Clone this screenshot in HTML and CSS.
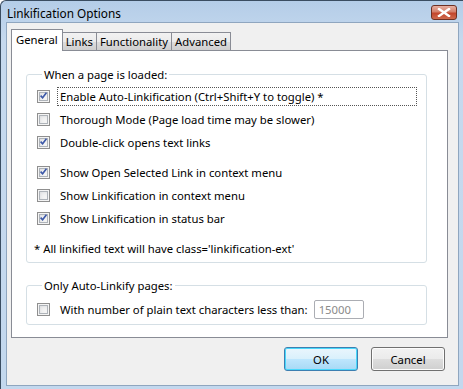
FILE: index.html
```html
<!DOCTYPE html>
<html lang="en">
<head>
    <meta charset="UTF-8">
    <title>Linkification Options</title>
    <link rel="stylesheet" href="styles.css">
</head>
<body>

    <div class="window">
        <!-- Title bar -->
        <div class="titlebar">
            <span class="title">Linkification Options</span>
            <span class="close-btn">
                <svg width="14" height="9" viewBox="0 0 14 9">
                    <path d="M2 1 L12 8 M12 1 L2 8" stroke="#fff" stroke-width="2.4" stroke-linecap="square"/>
                </svg>
            </span>
        </div>

        <div class="client">
            <!-- Tabs -->
            <div class="tabs">
                <div class="tab active">General</div>
                <div class="tab">Links</div>
                <div class="tab">Functionality</div>
                <div class="tab">Advanced</div>
            </div>

            <div class="panel">
                <fieldset class="group group-load">
                    <legend>When a page is loaded:</legend>
                    <div class="row"><span class="check on"></span><span class="label focus">Enable Auto-Linkification (Ctrl+Shift+Y to toggle) *</span></div>
                    <div class="row"><span class="check"></span><span class="label">Thorough Mode (Page load time may be slower)</span></div>
                    <div class="row"><span class="check on"></span><span class="label">Double-click opens text links</span></div>
                    <div class="row spaced"><span class="check on"></span><span class="label">Show Open Selected Link in context menu</span></div>
                    <div class="row"><span class="check"></span><span class="label">Show Linkification in context menu</span></div>
                    <div class="row"><span class="check on"></span><span class="label">Show Linkification in status bar</span></div>
                    <p class="note">* All linkified text will have class='linkification-ext'</p>
                </fieldset>

                <fieldset class="group group-only">
                    <legend>Only Auto-Linkify pages:</legend>
                    <div class="row"><span class="check"></span><span class="label">With number of plain text characters less than:</span><span class="textbox">15000</span></div>
                </fieldset>
            </div>

            <div class="buttons">
                <button class="btn default">OK</button>
                <button class="btn">Cancel</button>
            </div>
        </div>
    </div>

</body>
</html>
```

FILE: styles.css
```css
/* Page */
body {
    margin: 0;
    font-family: "Noto Sans", "DejaVu Sans", sans-serif;
    font-size: 11.3px;
    color: #000;
}

/* Window frame */
.window {
    width: 463px;
    height: 389px;
    box-sizing: border-box;
    border: 1px solid #3a4d61;
    border-bottom: none;
    border-right: none;
    border-radius: 6px 0 0 0;
    background: linear-gradient(#b4cde8, #c6d9ee 40px, #c3d8ee);
    display: flex;
    flex-direction: column;
}

.titlebar {
    height: 21px;
    display: flex;
    align-items: center;
    justify-content: space-between;
    padding: 0 6px 0 6px;
}

.title {
    font-size: 11.8px;
    margin-top: 2px;
}

/* Red close button */
.close-btn {
    width: 24px;
    height: 13px;
    border: 1px solid #6e3023;
    border-radius: 3px;
    background: linear-gradient(#e8b0a2, #d47f6b 45%, #c2452c 55%, #cf6a4e);
    display: flex;
    align-items: center;
    justify-content: center;
    margin-top: 2px;
}

/* Client area */
.client {
    flex: 1;
    margin: 0 4px 3px 5px;
    border: 1px solid #8fa6bf;
    background-color: #f0f0f0;
    padding: 7px 10px 0 4px;
    display: flex;
    flex-direction: column;
}

/* Tabs */
.tabs {
    display: flex;
    align-items: flex-end;
    height: 20px;
    position: relative;
    z-index: 1;
}

.tab {
    height: 18px;
    box-sizing: border-box;
    padding: 0 3px;
    border: 1px solid #898c95;
    border-bottom: none;
    margin-right: -1px;
    background: linear-gradient(#f2f2f2, #ebebeb 50%, #dddddd 51%, #cfcfcf);
    line-height: 17px;
}

.tab.active {
    height: 22px;
    margin-bottom: -1px;
    padding: 0 4px;
    background: #fff;
    line-height: 19px;
}

.panel {
    background: #fff;
    border: 1px solid #898c95;
    height: 288px;
    box-sizing: border-box;
    padding: 16px 20px 0 14px;
}

/* Group boxes */
.group {
    margin: 0;
    border: 1px solid #d5dfe5;
    border-radius: 3px;
    padding: 3px 0 0 10px;
}

.group legend {
    margin-left: 5px;
    padding: 0 2px;
}

.group-load {
    height: 196px;
    box-sizing: border-box;
}

.group-only {
    margin-top: 15px;
    height: 47px;
    box-sizing: border-box;
    padding-top: 5px;
}

.row {
    height: 23px;
    display: flex;
    align-items: center;
}

.row.spaced {
    margin-top: 7px;
}

/* Vista style checkbox */
.check {
    width: 13px;
    height: 13px;
    box-sizing: border-box;
    border: 1px solid #8f8f8f;
    background: #f4f4f4;
    box-shadow: inset 0 0 0 1px #f4f4f4, inset 0 0 0 2px #aeb3b9, inset 2px 2px 4px #d5d7da;
    flex-shrink: 0;
    margin-right: 7px;
    position: relative;
}

.check.on::after {
    content: "";
    position: absolute;
    left: 2px;
    top: 1px;
    width: 7px;
    height: 7px;
    background: no-repeat center/7px 7px url("data:image/svg+xml,%3Csvg xmlns='http://www.w3.org/2000/svg' viewBox='0 0 7 7'%3E%3Cpath d='M0.6 3.6 L2.6 5.8 L6.4 0.6' fill='none' stroke='%233c58a8' stroke-width='1.6'/%3E%3C/svg%3E");
}

.label {
    padding: 1px 2px;
    border: 1px dotted transparent;
}

.label.focus {
    border-color: #555;
    flex: 1;
    margin-right: 9px;
}

.note {
    margin: 11px 0 0 -3px;
}

.textbox {
    width: 50px;
    height: 19px;
    box-sizing: border-box;
    border: 1px solid #abadb3;
    border-radius: 2px;
    color: #8a8a8a;
    padding: 0 4px;
    line-height: 17px;
    margin-left: 3px;
}

/* Buttons */
.buttons {
    display: flex;
    justify-content: flex-end;
    gap: 13px;
    margin: 9px 3px 0 0;
}

.btn {
    width: 74px;
    height: 24px;
    font-family: inherit;
    font-size: 11.3px;
    border: 1px solid #707070;
    border-radius: 3px;
    background: linear-gradient(#f2f2f2, #ebebeb 50%, #dddddd 51%, #cfcfcf);
    box-shadow: inset 0 0 0 1px #fcfcfc;
    padding: 0;
}

.btn.default {
    border-color: #3c7fb1;
    box-shadow: inset 0 0 0 1px #48d8fb;
    background: linear-gradient(#eaf6fd, #d9f0fc 50%, #bee6fd 51%, #a7d9f5);
}
```
